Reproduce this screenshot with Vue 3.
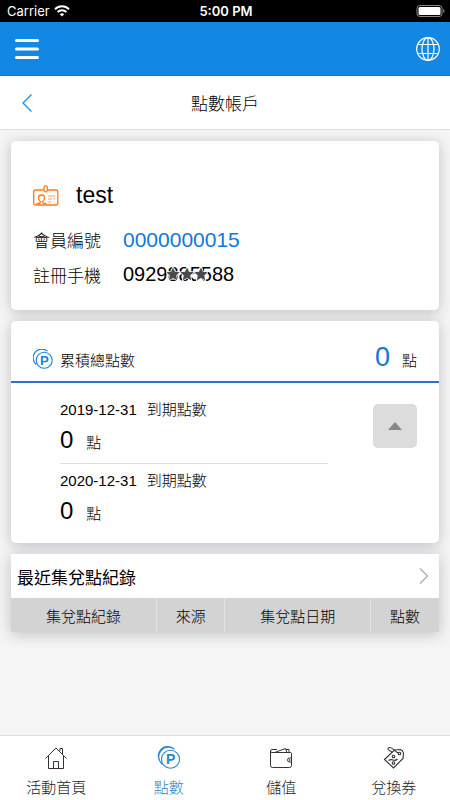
<script setup>
import { ref } from 'vue'

const expanded = ref(true)
const expiries = [
  { date: '2019-12-31', points: 0 },
  { date: '2020-12-31', points: 0 },
]
const columns = ['集兌點紀錄', '來源', '集兌點日期', '點數']
const stars = [0, 1, 2]
</script>

<template>
  <div class="page">
    <div class="status">
      <div class="carrier">
        <span>Carrier</span>
        <svg width="16" height="12" viewBox="0 0 16 12" fill="none" stroke="#fff" stroke-width="2">
          <path d="M1 4.2a10 10 0 0 1 14 0M3.6 7a6.2 6.2 0 0 1 8.8 0" />
          <path d="M8 11.4 5.8 9.2a3.2 3.2 0 0 1 4.4 0z" fill="#fff" stroke="none" />
        </svg>
      </div>
      <span class="time">5:00 PM</span>
      <svg class="battery" width="29" height="14" viewBox="0 0 29 14">
        <rect x="1" y="1.5" width="25" height="11" rx="3" fill="none" stroke="#8a8a8a" />
        <rect x="2.5" y="3" width="22" height="8" rx="1.5" fill="#fff" />
        <path d="M27.2 5v4q1.300-.6 1.300-2t-1.300-2z" fill="#8a8a8a" />
      </svg>
    </div>

    <header class="appbar">
      <button class="icon-btn" aria-label="選單">
        <svg width="24" height="22" viewBox="0 0 24 22" stroke="#fff" stroke-width="3" stroke-linecap="round">
          <path d="M1.500 2.500h21M1.500 11h21M1.500 19.500h21" />
        </svg>
      </button>
      <button class="icon-btn" aria-label="語言">
        <svg width="24" height="24" viewBox="0 0 24 24" fill="none" stroke="#fff" stroke-width="1.200">
          <circle cx="12" cy="12" r="11.300" />
          <ellipse cx="12" cy="12" rx="6" ry="11.300" />
          <path d="M12 .7v22.600M2.200 7.500h19.600M2.200 16.500h19.600" />
        </svg>
      </button>
    </header>

    <div class="titlebar">
      <button class="icon-btn" aria-label="返回">
        <svg width="12" height="20" viewBox="0 0 12 20" fill="none" stroke="#1b96f0" stroke-width="1.400">
          <path d="M10.500 1.500 2 10l8.500 8.500" />
        </svg>
      </button>
      <h1>點數帳戶</h1>
      <span></span>
    </div>

    <main>
      <section class="card member">
        <div class="name-row">
          <svg width="26" height="21" viewBox="0 0 26 21" fill="none" stroke="#ff7a1a" stroke-width="1.300">
            <path d="M10.500 5H2.500Q.7 5 .7 7v11q0 2 1.800 2h20.500q1.800 0 1.800-2V7q0-2-1.800-2h-8" />
            <rect x="11" y=".8" width="3.400" height="6" rx="1.600" />
            <path d="M3.500 18.300h3.200l.8-1.500q-2-1.500-2-4 0-2.800 3-2.800t3 2.800q0 2.500-2 4l.8 1.500h3.200" />
            <path d="M15 11h7M15 14h4M20 14h2M15 17h3" stroke-width="1" stroke="#f8a06b" />
          </svg>
          <span class="name">test</span>
        </div>
        <dl>
          <dt>會員編號</dt>
          <dd class="number">0000000015</dd>
          <dt>註冊手機</dt>
          <dd class="phone">
            0929885588
            <span class="mask">
              <svg v-for="s in stars" :key="s" width="14" height="14" viewBox="0 0 14 14">
                <path d="m7 .5 2 4.300 4.700.5-3.500 3.200 1 4.700L7 10.900l-4.200 2.300 1-4.700L.3 5.300 5 4.800z" fill="#4a4a4e" stroke="#fff" stroke-width="1.600" paint-order="stroke" />
              </svg>
            </span>
          </dd>
        </dl>
      </section>

      <section class="card">
        <div class="total">
          <svg width="20" height="20" viewBox="0 0 20 20" fill="none" stroke="#1a80e0" stroke-width="1.100">
            <circle cx="11.200" cy="11.200" r="8" />
            <path d="M3.200 15.500A8.200 8.200 0 0 1 14.500 2.200M1.200 12.500A8.500 8.500 0 0 1 12.500 1" />
            <text x="7" y="16" class="coin">P</text>
          </svg>
          <h2>累積總點數</h2>
          <span class="sum">0</span>
          <span class="unit">點</span>
        </div>
        <div class="details">
          <ul>
            <li v-for="e in expiries" :key="e.date">
              <div class="date"><span>{{ e.date }}</span><span>到期點數</span></div>
              <div class="points"><span class="value">{{ e.points }}</span><span class="unit">點</span></div>
            </li>
          </ul>
          <button class="toggle" aria-label="收合" :aria-expanded="expanded" @click="expanded = !expanded">
            <svg width="14" height="8" viewBox="0 0 14 8"><path d="M7 0l7 8H0z" fill="#888" /></svg>
          </button>
        </div>
      </section>

      <section class="records">
        <a href="#records" class="more">
          <span>最近集兌點紀錄</span>
          <svg width="10" height="18" viewBox="0 0 10 18" fill="none" stroke="#aaa" stroke-width="1.300">
            <path d="m1 1.500 7.500 7.500L1 16.500" />
          </svg>
        </a>
        <table>
          <thead>
            <tr><th v-for="c in columns" :key="c" scope="col">{{ c }}</th></tr>
          </thead>
        </table>
      </section>
    </main>

    <nav>
      <a href="#home">
        <svg width="24" height="24" viewBox="0 0 24 24" fill="none" stroke="#333" stroke-width="1">
          <path d="M1.500 12.500 12 2l10.500 10.500M4.500 10v12.500h15V10M16 5V2.500h2.500v6" />
          <path d="M9.500 22.500V15.500h5v7" />
        </svg>
        <span>活動首頁</span>
      </a>
      <a href="#points" class="active" aria-current="page">
        <svg width="24" height="24" viewBox="0 0 24 24" fill="none" stroke="#2a86cc" stroke-width="1.100">
          <circle cx="13.500" cy="13.200" r="9" />
          <path d="M5.500 18.500A9.500 9.500 0 0 1 17.500 3.200M3 15.500A9.500 9.500 0 0 1 15.500 1.800" />
          <text x="9" y="18" class="coin big">P</text>
        </svg>
        <span>點數</span>
      </a>
      <a href="#topup">
        <svg width="24" height="24" viewBox="0 0 24 24" fill="none" stroke="#333" stroke-width="1">
          <path d="M22.500 12V7.500q0-1-1-1H3q-1.500 0-1.500-1.500T3 3.500h5M1.500 5v14.500q0 2 2 2h17q2 0 2-2V16" />
          <path d="m5.500 6.500 11-4 1.500 4M16.500 3.500h3.500v3M22.500 12h-2q-2 0-2 2t2 2h2z" />
          <circle cx="20.700" cy="14" r=".5" />
        </svg>
        <span>儲值</span>
      </a>
      <a href="#coupons">
        <svg width="24" height="24" viewBox="0 0 24 24" fill="none" stroke="#333" stroke-width="1.100">
          <path d="M2.500 13.500 12.500 4l6-.5q2.500 1 3 3.500l-.5 5.500-9.500 9.500z" />
          <circle cx="17.500" cy="7.500" r="1.300" />
          <path d="M17 7C13 6.500 11 1 7.500 1.500S7 5 10 5.500M6.500 14.500q2-1.500 4.500-.5t4.500-1" />
          <circle cx="11.500" cy="10.500" r="1.300" />
          <circle cx="11.500" cy="17" r="1.300" />
        </svg>
        <span>兌換券</span>
      </a>
    </nav>
  </div>
</template>

<style>
body {
  margin: 0;
  background: #f5f5f5;
}
</style>

<style scoped>
.page {
  display: flex;
  flex-direction: column;
  min-height: 100vh;
  font-family: "Liberation Sans", "Noto Sans CJK TC", sans-serif;
  font-weight: 300;
  font-size: 15px;
  color: #000;
}
h1, h2, dl, dd, ul {
  margin: 0;
  padding: 0;
  font-weight: 300;
}
svg {
  display: block;
  flex: none;
}
a {
  color: inherit;
  text-decoration: none;
}
.icon-btn {
  padding: 0;
  border: 0;
  background: none;
}
.status {
  display: grid;
  grid-template-columns: 1fr auto 1fr;
  align-items: center;
  height: 22px;
  padding: 0 5px 0 7px;
  background: #000;
  color: #fff;
  font: 400 13px Inter, sans-serif;
}
.carrier {
  display: flex;
  align-items: center;
  gap: 4px;
}
.time {
  font-weight: 600;
}
.battery {
  justify-self: end;
}
.appbar {
  display: flex;
  align-items: center;
  justify-content: space-between;
  box-sizing: border-box;
  height: 54px;
  padding: 0 10px 0 15px;
  background: #1387e4;
  border-bottom: 1px solid #0b76d0;
}
.titlebar {
  display: grid;
  grid-template-columns: 1fr auto 1fr;
  align-items: center;
  box-sizing: border-box;
  height: 54px;
  padding: 0 21px;
  background: #fff;
  border-bottom: 1px solid #ddd;
}
.titlebar .icon-btn {
  justify-self: start;
}
h1 {
  font-size: 17px;
}
main {
  flex: 1;
  display: flex;
  flex-direction: column;
  gap: 11px;
  padding: 11px;
}
.card, .records {
  background: #fff;
  box-shadow: 0 2px 14px rgba(40, 40, 60, 0.26);
}
.card {
  border-radius: 5px;
}
.member {
  padding: 36px 22px 18px;
}
.name-row {
  display: flex;
  align-items: center;
  gap: 17px;
  height: 36px;
}
.name {
  font-size: 23px;
}
dl {
  display: grid;
  grid-template-columns: 90px 1fr;
  grid-auto-rows: 35px;
  align-items: center;
  padding-top: 9px;
}
dt {
  font-size: 17px;
}
.number {
  font-size: 21px;
  color: #0f78dc;
}
.phone {
  position: relative;
  font-size: 20px;
}
.mask {
  position: absolute;
  left: 43px;
  top: 4px;
  display: flex;
}
.total {
  display: flex;
  align-items: baseline;
  box-sizing: border-box;
  height: 62px;
  padding: 21px 22px 0;
  border-bottom: 2px solid #2b6fd6;
}
.total svg {
  align-self: flex-start;
  margin: 7px 7px 0 0;
}
h2 {
  flex: 1;
  font-size: 15px;
}
.coin {
  font: 700 13px "Liberation Sans", sans-serif;
  fill: #1a80e0;
  stroke: none;
}
.coin.big {
  font-size: 14px;
  fill: #2a86cc;
}
.sum {
  margin-right: 12px;
  font-size: 27px;
  line-height: 30px;
  color: #0f78dc;
}
.details {
  display: flex;
  justify-content: space-between;
  align-items: flex-start;
  padding: 10px 22px 9px 49px;
}
ul {
  flex: 1;
  max-width: 268px;
  list-style: none;
}
li {
  padding: 5px 0 2px;
}
li + li {
  border-top: 1px solid #ddd;
}
.date {
  display: flex;
  gap: 10px;
  line-height: 24px;
}
.points {
  display: flex;
  align-items: baseline;
  gap: 13px;
  line-height: 36px;
}
.value {
  font-size: 24px;
}
.toggle {
  display: grid;
  place-items: center;
  width: 44px;
  height: 44px;
  margin-top: 11px;
  padding: 0;
  border: 0;
  border-radius: 5px;
  background: #dcdcdc;
}
.more {
  display: flex;
  align-items: center;
  justify-content: space-between;
  height: 44px;
  padding: 0 10px 0 6px;
  font-size: 17px;
  font-weight: 400;
}
table {
  width: 100%;
  table-layout: fixed;
  border-collapse: collapse;
}
th {
  box-sizing: border-box;
  width: 34%;
  height: 34px;
  padding: 0;
  background: #d3d3d3;
  font-size: 15px;
  font-weight: 300;
}
th:nth-child(even) {
  width: 16%;
}
th + th {
  border-left: 1px solid #e3e3e3;
}
nav {
  display: grid;
  grid-template-columns: repeat(4, 1fr);
  box-sizing: border-box;
  height: 65px;
  padding-top: 10px;
  background: #fff;
  border-top: 1px solid #ddd;
}
nav a {
  display: flex;
  flex-direction: column;
  align-items: center;
  gap: 7px;
  color: #222;
  line-height: 22px;
}
nav .active {
  color: #2a86cc;
}
</style>
